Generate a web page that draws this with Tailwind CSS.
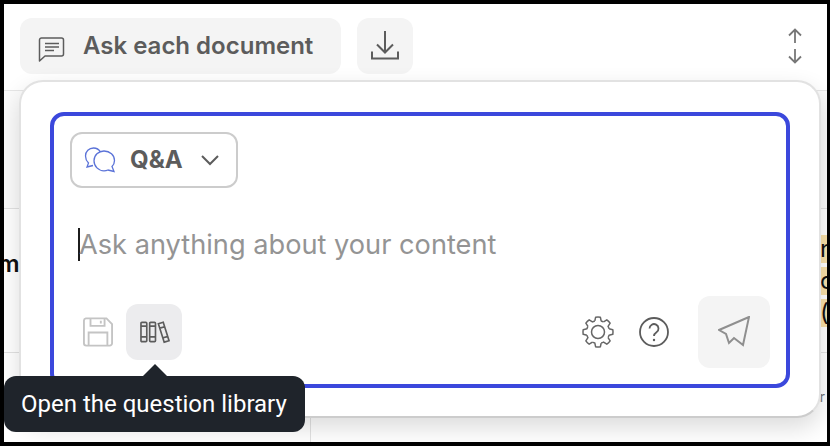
<!DOCTYPE html>
<html lang="en">
<head>
    <meta charset="UTF-8">
    <title>Ask each document</title>
    <script src="https://cdn.jsdelivr.net/npm/@tailwindcss/browser@4"></script>
</head>
<body class="bg-black w-[830px] h-[446px] overflow-hidden font-['Inter',sans-serif]">
    <div class="relative mt-[4px] ml-[4px] w-[823px] h-[438px] bg-white overflow-hidden flex flex-col">
        <!-- Toolbar -->
        <div class="h-[86px] shrink-0 pt-[14px] pl-[16px] pr-[24px] flex items-start gap-[16px]">
            <div class="w-[321px] h-[56px] rounded-[12px] bg-[#f4f4f4] flex items-center pl-[17px] gap-[18px] text-[#5c5c5c]">
                <svg class="w-[28px] h-[28px] mt-[4px]" viewBox="0 0 28 28" fill="none" stroke="currentColor" stroke-width="1.5">
                    <path d="M2.500 27V6a2 2 0 0 1 2-2h20a2 2 0 0 1 2 2v14a2 2 0 0 1-2 2H8z" stroke-linejoin="round"/>
                    <path d="M8 9.500h14M8 13h14M8 16.500h9"/>
                </svg>
                <span class="text-[24px] font-semibold leading-none">Ask each document</span>
            </div>
            <div class="w-[56px] h-[56px] rounded-[12px] bg-[#f4f4f4] flex items-center justify-center text-[#5c5c5c]">
                <svg class="w-[30px] h-[32px]" viewBox="0 0 30 32" fill="none" stroke="currentColor" stroke-width="2">
                    <path d="M15 1v21M7 14.500l8 8 8-8"/>
                    <path d="M2 21.500v7h26v-7"/>
                </svg>
            </div>
            <div class="ml-auto mt-[10px] text-[#777777]">
                <svg class="w-[16px] h-[36px]" viewBox="0 0 16 36" fill="none" stroke="currentColor" stroke-width="1.800">
                    <path d="M8 15V2M2 7.500L8 1.500l6 6"/>
                    <path d="M8 21v13M2 28.500l6 6 6-6"/>
                </svg>
            </div>
        </div>

        <!-- Table behind the card -->
        <div class="flex-1 border-t border-[#e6e6e6] bg-[#fbfbfb] flex flex-col text-[#111] text-[24px] leading-[30px]">
            <div class="h-[118px] shrink-0 border-b border-[#e2e2e2]"></div>
            <div class="h-[144px] shrink-0 border-b border-[#e2e2e2] bg-white flex justify-between items-center">
                <span class="-ml-[6px] -mt-[33px] font-semibold">m</span>
                <div class="flex flex-col gap-[4px] w-[7px] overflow-hidden">
                    <span class="bg-[#f8e0a8] h-[28px] leading-[28px]">n</span>
                    <span class="bg-[#f8e0a8] h-[28px] leading-[28px]">c</span>
                    <span class="bg-[#f8e0a8] h-[28px] leading-[28px]">(</span>
                </div>
            </div>
            <div class="flex-1 bg-white flex justify-between">
                <div class="w-[307px] border-r border-[#e2e2e2]"></div>
                <span class="mt-[38px] mr-[2px] text-[14px] leading-[12px] text-[#777]">r</span>
            </div>
        </div>

        <!-- Ask card -->
        <div class="absolute left-[15px] top-[76px] w-[802px] h-[338px] bg-white border-2 border-[#e2e2e2] border-b-[#cccccc] rounded-[24px] shadow-[0_10px_24px_rgba(0,0,0,0.14)] pt-[30px] pl-[29px]">
            <div class="relative w-[740px] h-[276px] border-[4px] border-[#3b48dc] rounded-[14px] flex flex-col">
                <div class="mt-[16px] ml-[16px] w-[168px] h-[56px] border-2 border-[#cccccc] rounded-[12px] flex items-center pl-[12px] text-[#5c5c5c]">
                    <svg class="w-[32px] h-[26px] shrink-0" viewBox="0 0 32 26" fill="none" stroke="#5b73d8" stroke-width="1.300">
                        <path d="M9 18.500l-6 1.500 1.500-4C2.500 14 1.500 11.500 1.500 9 1.500 4.500 5 1 9.500 1c3 0 5.500 1.500 7 4"/>
                        <path d="M20 4c6 0 10.500 4 10.500 9.500 0 2.500-1 4.500-2.500 6l2 5-6-1.500c-1.200.5-2.500.8-4 .8-5.500 0-10-4.500-10-10S14.500 4 20 4z"/>
                    </svg>
                    <span class="ml-[14px] text-[24px] font-bold leading-none">Q&amp;A</span>
                    <svg class="ml-[17px] w-[20px] h-[12px]" viewBox="0 0 20 12" fill="none" stroke="currentColor" stroke-width="2">
                        <path d="M2 2l8 8 8-8"/>
                    </svg>
                </div>
                <div class="mt-[38px] ml-[24px] h-[36px] flex items-center">
                    <span class="w-[2px] h-[33px] bg-[#1c1c1c]"></span>
                    <span class="-ml-[1px] mt-[1px] text-[27.2px] text-[#949494] leading-none">Ask anything about your content</span>
                </div>
                <div class="mt-auto mb-[16px] h-[72px] flex items-center pl-[29px] pr-[16px]">
                    <svg class="w-[30px] h-[30px] text-[#c4c4c4]" viewBox="0 0 32 32" fill="none" stroke="currentColor" stroke-width="2">
                        <path d="M3 1.500h22l6 6V28a2.500 2.500 0 0 1-2.500 2.500h-25A2.500 2.500 0 0 1 1 28V4a2.500 2.500 0 0 1 2-2.500z"/>
                        <path d="M8 1.500v8h15v-8M19 4v3"/>
                        <path d="M6 30V16.500h20V30"/>
                    </svg>
                    <div class="ml-[13px] w-[56px] h-[56px] rounded-[12px] bg-[#ececee] flex items-center justify-center text-[#5c5c5c]">
                        <svg class="w-[30px] h-[24px] ml-[1px]" viewBox="0 0 31 24" fill="none" stroke="currentColor" stroke-width="1.700">
                            <rect x="1" y="2" width="6" height="20" rx="1"/>
                            <rect x="10" y="2" width="6" height="20" rx="1"/>
                            <path d="M1 6h6M1 17h6M10 6h6M10 17h6"/>
                            <path d="M19 3.500l5-1.500 6 19-5 1.500zM20.500 8l5-1.500M24 18l5-1.500"/>
                        </svg>
                    </div>
                    <svg class="ml-auto w-[32px] h-[32px] text-[#666]" viewBox="0 0 32 32" fill="none" stroke="currentColor" stroke-width="1.500" stroke-linejoin="round">
                        <circle cx="16" cy="16" r="6.500"/>
                        <path d="M12.830 4.950L13.650 1.180Q16 .8 18.350 1.180L19.170 4.950A11.500 11.500 0 0 1 21.580 5.940"/>
                        <path transform="rotate(45 16 16)" d="M12.830 4.950L13.650 1.180Q16 .8 18.350 1.180L19.170 4.950A11.500 11.500 0 0 1 21.580 5.940"/>
                        <path transform="rotate(90 16 16)" d="M12.830 4.950L13.650 1.180Q16 .8 18.350 1.180L19.170 4.950A11.500 11.500 0 0 1 21.580 5.940"/>
                        <path transform="rotate(135 16 16)" d="M12.830 4.950L13.650 1.180Q16 .8 18.350 1.180L19.170 4.950A11.500 11.500 0 0 1 21.580 5.940"/>
                        <path transform="rotate(180 16 16)" d="M12.830 4.950L13.650 1.180Q16 .8 18.350 1.180L19.170 4.950A11.500 11.500 0 0 1 21.580 5.940"/>
                        <path transform="rotate(225 16 16)" d="M12.830 4.950L13.650 1.180Q16 .8 18.350 1.180L19.170 4.950A11.500 11.500 0 0 1 21.580 5.940"/>
                        <path transform="rotate(270 16 16)" d="M12.830 4.950L13.650 1.180Q16 .8 18.350 1.180L19.170 4.950A11.500 11.500 0 0 1 21.580 5.940"/>
                        <path transform="rotate(315 16 16)" d="M12.830 4.950L13.650 1.180Q16 .8 18.350 1.180L19.170 4.950A11.500 11.500 0 0 1 21.580 5.940"/>
                    </svg>
                    <svg class="ml-[24px] w-[32px] h-[32px] text-[#5c5c5c]" viewBox="0 0 32 32" fill="none" stroke="currentColor" stroke-width="1.800">
                        <circle cx="16" cy="16" r="14"/>
                        <path d="M11.500 12.500a4.500 4.500 0 1 1 7 3.800c-1.500 1-2.500 1.900-2.500 3.700"/>
                        <circle cx="16" cy="24" r="1.200" fill="currentColor" stroke="none"/>
                    </svg>
                    <div class="ml-[28px] w-[72px] h-[72px] rounded-[12px] bg-[#f4f4f4] flex items-center justify-center text-[#8f8f8f]">
                        <svg class="w-[32px] h-[32px]" viewBox="0 0 32 32" fill="none" stroke="currentColor" stroke-width="2">
                            <path d="M31 1L1 14l7 4 3 9 5-5 9 7z"/>
                        </svg>
                    </div>
                </div>
            </div>
        </div>

        <!-- Tooltip -->
        <div class="absolute left-0 top-[372px] w-[301px] h-[56px] rounded-[12px] bg-[#1f242b] text-white flex items-center pl-[17px] font-['Roboto',sans-serif] text-[24px] leading-none">
            <span class="absolute left-[139px] -top-[12px] w-0 h-0 border-x-[12px] border-x-transparent border-b-[12px] border-b-[#1f242b]"></span>
            Open the question library
        </div>
    </div>
</body>
</html>
